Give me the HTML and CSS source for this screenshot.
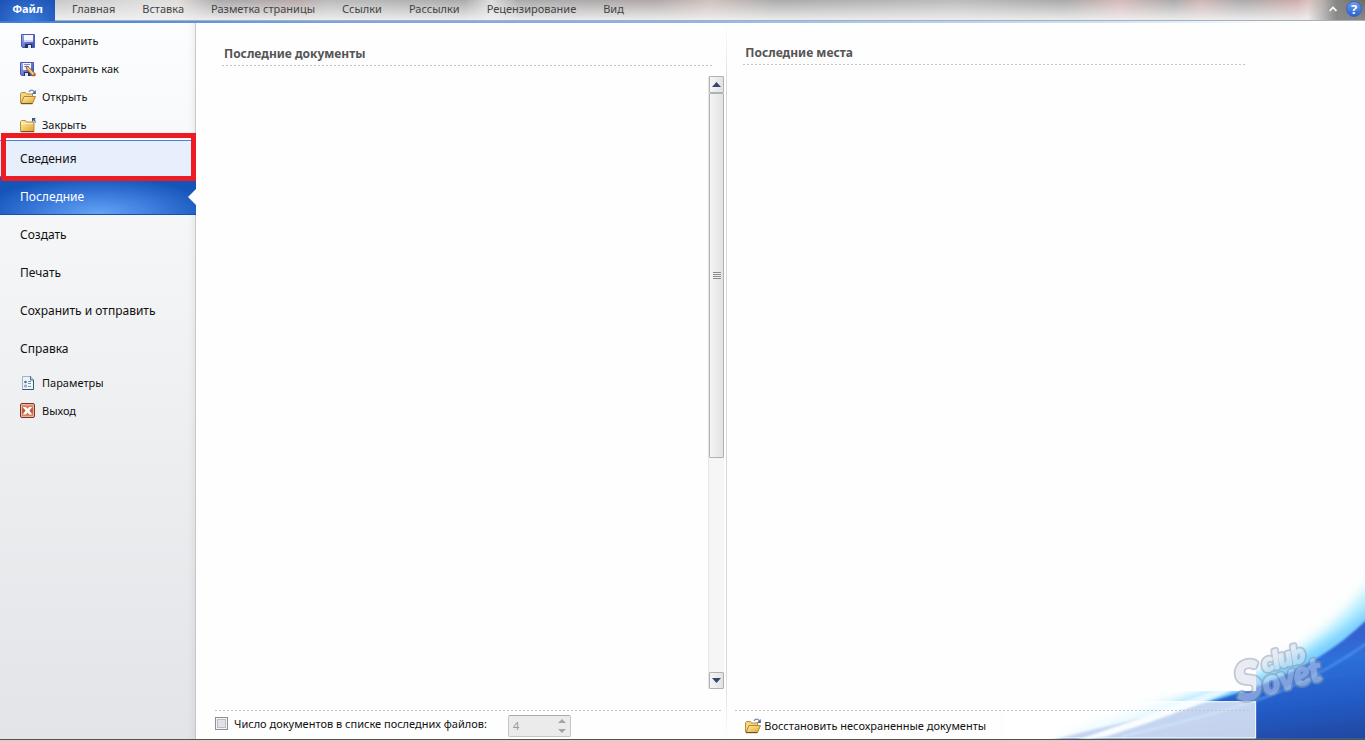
FILE: index.html
```html
<!DOCTYPE html>
<html lang="ru">
<head>
<meta charset="utf-8">
<title>Последние документы</title>
<link rel="stylesheet" href="styles.css">
</head>
<body>
<svg class="symbols" aria-hidden="true">
  <defs>
    <linearGradient id="gold" x1="0" y1="0" x2="1" y2="1"><stop offset="0" stop-color="#fff2ae"/><stop offset="1" stop-color="#e0a02e"/></linearGradient>
    <linearGradient id="disk" x1="0" y1="0" x2="1" y2="1"><stop offset="0" stop-color="#a3aff0"/><stop offset="1" stop-color="#3345ac"/></linearGradient>
    <linearGradient id="exit" x1="0" y1="0" x2="0" y2="1"><stop offset="0" stop-color="#eda58c"/><stop offset=".5" stop-color="#c4512f"/><stop offset="1" stop-color="#dd9878"/></linearGradient>
    <symbol id="i-save" viewBox="0 0 16 16">
      <path d="M1.500 1.500h13v13h-12l-1-1z" fill="url(#disk)" stroke="#4a5ab8"/>
      <path d="M4 2h9v7H4z" fill="#f5f9ff"/><path d="M4 7h9v2H4z" fill="#c9daf2"/>
      <path d="M5 11h7v4H5z" fill="#26305f"/><path d="M8 12h3v3H8z" fill="#dce4f5"/>
    </symbol>
    <symbol id="i-saveas" viewBox="0 0 16 16">
      <path d="M.5 1.500h13v13h-12l-1-1z" fill="url(#disk)" stroke="#4a5ab8"/>
      <path d="M3 2h8v7H3z" fill="#f5f9ff"/><path d="M4 3.500h6M4 5.500h5" stroke="#8298c8"/>
      <path d="M4 11h6v4H4z" fill="#26305f"/><path d="M5 12h3v3H5z" fill="#dce4f5"/>
      <path d="M6 5l2 .5 7 7-.5 2-2 .5-6-7z" fill="#e9ad58" stroke="#77502f" stroke-width=".8"/>
      <path d="M8 7l6 6.500" stroke="#ffe1a0"/><path d="M13 14l2-2 .7 2.500-1.200 1z" fill="#b34b45"/>
    </symbol>
    <symbol id="i-open" viewBox="0 0 16 16">
      <path d="M.5 14V4.500l1-1h4l1 1.500h6V8" fill="#f6d57c" stroke="#b98f45"/>
      <path d="M1 14.500L4 7.500h11.500l-3 7z" fill="url(#gold)" stroke="#b88532"/>
      <path d="M1 14.700h11.500" stroke="#694513"/>
      <path d="M9 3c1-2.500 4-2.500 5.500 0" fill="none" stroke="#7190ba" stroke-width="1.200"/><path d="M15.800 1v4h-4z" fill="#466895"/>
    </symbol>
    <symbol id="i-close" viewBox="0 0 16 16">
      <path d="M.5 14.500V4.500l1-1h4l1 1.500h7.500v9.500z" fill="url(#gold)" stroke="#b98f45"/>
      <path d="M1 6.500h12" stroke="#fff0b5"/><path d="M1 14.700h13" stroke="#694513"/>
      <path d="M12 1h4l-1.300 1.300C16 4 15.800 5 15 6.500c0-1.500-.3-2.300-1.300-3.200L12 5z" fill="#365680"/>
    </symbol>
    <symbol id="i-options" viewBox="0 0 16 16">
      <path d="M2.500 1.500h8l3 3v10h-11z" fill="#edf4fb" stroke="#9fb2c8"/>
      <path d="M13.500 5v9.500h-11" fill="none" stroke="#3c5675"/><path d="M10.500 1v4h3" fill="#b9cde1" stroke="#526d8e"/>
      <circle cx="5.500" cy="7" r="1.300" fill="#506d90"/><circle cx="5.500" cy="11" r="1" fill="#fff" stroke="#6b85a3"/>
      <path d="M8 6.500h3M8 8.500h3M8 11.500h3" stroke="#7690ae"/>
    </symbol>
    <symbol id="i-exit" viewBox="0 0 16 16">
      <rect x=".5" y=".5" width="14" height="14" rx="1.500" fill="url(#exit)" stroke="#79372b"/>
      <rect x="1.500" y="1.500" width="12" height="12" rx=".5" fill="none" stroke="#edb59f"/>
      <path d="M2.800 4h3l1.700 1.800L9.200 4h3L9.500 7.500l2.700 4h-3L7.500 9.600l-1.700 1.900h-3l2.700-4z" fill="#fff"/>
    </symbol>
  </defs>
</svg>

<header class="ribbon">
  <nav class="tabs">
    <button class="tab tab-file">Файл</button>
    <button class="tab">Главная</button>
    <button class="tab">Вставка</button>
    <button class="tab">Разметка страницы</button>
    <button class="tab">Ссылки</button>
    <button class="tab">Рассылки</button>
    <button class="tab">Рецензирование</button>
    <button class="tab">Вид</button>
  </nav>
  <div class="ribbon-tools">
    <button class="tool" aria-label="Свернуть ленту"><svg width="10" height="8" viewBox="0 0 10 8"><path d="M1.500 6L5 2.500 8.500 6" fill="none" stroke="#777" stroke-width="3"/><path d="M1.500 6L5 2.500 8.500 6" fill="none" stroke="#f4f4f4" stroke-width="2"/></svg></button>
    <button class="tool help" aria-label="Справка">?</button>
  </div>
</header>

<div class="backstage">
  <nav class="side">
    <button class="cmd"><svg class="icon"><use href="#i-save"/></svg>Сохранить</button>
    <button class="cmd"><svg class="icon"><use href="#i-saveas"/></svg>Сохранить как</button>
    <button class="cmd"><svg class="icon"><use href="#i-open"/></svg>Открыть</button>
    <button class="cmd"><svg class="icon"><use href="#i-close"/></svg>Закрыть</button>
    <div class="marked"><button class="page hover">Сведения</button></div>
    <button class="page current">Последние</button>
    <button class="page">Создать</button>
    <button class="page">Печать</button>
    <button class="page">Сохранить и отправить</button>
    <button class="page last">Справка</button>
    <button class="cmd"><svg class="icon"><use href="#i-options"/></svg>Параметры</button>
    <button class="cmd"><svg class="icon"><use href="#i-exit"/></svg>Выход</button>
  </nav>

  <main class="content">
    <svg class="swoosh" viewBox="0 0 1080 507" aria-hidden="true">
      <defs>
        <linearGradient id="sea" x1=".6" y1="0" x2=".9" y2="1"><stop offset="0" stop-color="#3d4fc4"/><stop offset=".4" stop-color="#2d70da"/><stop offset=".72" stop-color="#235bc6"/><stop offset="1" stop-color="#2348a0"/></linearGradient>
        <filter id="soft" x="-10%" y="-10%" width="120%" height="120%"><feGaussianBlur stdDeviation="18"/></filter>
        <filter id="fine"><feGaussianBlur stdDeviation="3"/></filter>
        <clipPath id="shown"><path d="M753 0H1080V507H0V362H753z"/></clipPath>
      </defs>
      <g clip-path="url(#shown)">
        <path d="M1120 10C1010 160 860 280 650 350S300 440 120 520L620 450 960 280 1120 150z" fill="#b5eeff" filter="url(#soft)"/>
        <path d="M1120 95C1000 200 860 290 700 350S420 440 260 500L700 410 960 275 1120 150z" fill="#6fcaff" filter="url(#soft)"/>
        <path d="M1100 135C980 255 860 315 700 368S370 450 140 510H1100z" fill="url(#sea)" filter="url(#fine)"/>
        <path d="M640 355C520 400 400 450 210 512L300 500C450 455 560 410 680 362z" fill="#e4f8ff" filter="url(#fine)"/>
        <path d="M1085 220C970 300 850 360 740 396S500 465 350 500" fill="none" stroke="#4a91ec" stroke-width="7" filter="url(#fine)"/>
      </g>
      <path d="M0 395H752V504H0z" fill="#fff" fill-opacity=".74"/>
      <path d="M300 362H752M420 395H752V504H0M752 335V362" fill="none" stroke="#fff" stroke-width="3"/>
      <g class="watermark">
        <g transform="translate(704 396) rotate(-15)">
          <text class="halo"><tspan class="initial">S</tspan><tspan class="rest">ovet</tspan></text>
          <text class="face"><tspan class="initial">S</tspan><tspan class="rest">ovet</tspan></text>
        </g>
        <g transform="translate(778 306) rotate(-15)">
          <text class="halo club">club</text>
          <text class="face club">club</text>
        </g>
      </g>
    </svg>

    <section class="pane docs">
      <div class="pane-main">
        <h2 class="title">Последние документы</h2>
        <div class="scrollbar">
          <button class="scroll-btn" aria-label="Вверх"><svg width="9" height="5" viewBox="0 0 9 5"><path d="M0 5L4.500 0 9 5z" fill="#33476e"/></svg></button>
          <div class="track"><div class="thumb"><span class="grip"></span></div></div>
          <button class="scroll-btn" aria-label="Вниз"><svg width="9" height="5" viewBox="0 0 9 5"><path d="M0 0L4.500 5 9 0z" fill="#33476e"/></svg></button>
        </div>
      </div>
      <footer class="foot">
        <input class="check" type="checkbox" id="quick">
        <label for="quick">Число документов в списке последних файлов:</label>
        <div class="spin">
          <input class="spin-value" type="text" value="4" aria-label="Число документов" disabled>
          <svg width="8" height="16" viewBox="0 0 8 16"><path d="M0 5L4 1 8 5zM0 11L4 15 8 11z" fill="#a5a5a5"/></svg>
        </div>
      </footer>
    </section>

    <section class="pane places">
      <div class="pane-main">
        <h2 class="title">Последние места</h2>
      </div>
      <footer class="foot">
        <button class="recover"><svg class="icon"><use href="#i-open"/></svg>Восстановить несохраненные документы</button>
      </footer>
    </section>
  </main>
</div>
<div class="edge"></div>
</body>
</html>
```
FILE: styles.css
```css
* { box-sizing: border-box; }
body {
  margin: 0;
  height: 100vh;
  display: flex;
  flex-direction: column;
  overflow: hidden;
  background: #fefefe;
  color: #111;
  font: 11px/16px "Noto Sans", "Open Sans", sans-serif;
}
button {
  margin: 0;
  padding: 0;
  border: 0;
  background: none;
  color: inherit;
  font: inherit;
}
.symbols { position: absolute; width: 0; height: 0; }
.icon { width: 16px; height: 16px; flex: none; }

/* Ribbon */
.ribbon {
  flex: none;
  display: flex;
  justify-content: space-between;
  height: 23px;
  border-bottom: 2px solid #76a5ed;
  border-image: linear-gradient(90deg, #3f7bdc, #76a5ed 25%, #8ab4f0 50%, #cbe2fa 80%, #fff 95%) 1;
  background:
    linear-gradient(#0000 20px, #aab0b8 20px),
    linear-gradient(#fff0, #f1f1f1e0 90%),
    linear-gradient(90deg, #bbb 0, #ddd 11%, #e2dcda 13%, #aaa 16%, #b7a9a9 22%, #bbb 24%, #aaa 34%, #ddd 36%, #aaa 38%, #b0a8a8 48%, #cfc0bd 52%, #aaa 57%, #bbb 70%, #a9a9a9 78%, #d6b9b9 82%, #aaa 86%, #d0b5b5 88%, #aaa 91%, #cfaaaa 95%, #e6e0d6 97%, #e0ddd6 98%, #777 100%);
}
.tabs { display: flex; height: 20px; }
.tab { padding: 0 14px 2px 13px; color: #444; }
.tab-file {
  width: 55px;
  height: 21px;
  margin-right: 4px;
  padding: 0 0 3px;
  background: radial-gradient(ellipse at 50% 100%, #3c7fdc, #1b50b4);
  color: #fff;
  font-weight: bold;
}
.ribbon-tools {
  display: flex;
  align-items: center;
  gap: 8px;
  height: 20px;
  padding: 0 3px 3px 20px;
  background: linear-gradient(90deg, #6660, #666b 50%, #666b);
}
.tool { display: flex; align-items: center; justify-content: center; }
.help {
  width: 16px;
  height: 16px;
  border: 1px solid #3568c4;
  border-radius: 8px;
  background: linear-gradient(#6c9df0, #2c62cd);
  color: #fff;
  font-size: 13px;
  font-weight: bold;
}

/* Side menu */
.backstage { flex: 1; display: flex; min-height: 0; }
.side {
  flex: none;
  display: flex;
  flex-direction: column;
  width: 196px;
  padding-top: 4px;
  border-right: 1px solid #c6c9cc;
  background: linear-gradient(90deg, #0000 188px, #0000000c), linear-gradient(#fcfdfe, #f1f3f5 40%, #e2e4e7);
}
.cmd {
  display: flex;
  align-items: center;
  gap: 6px;
  height: 28px;
  padding-left: 20px;
  text-align: left;
}
.page {
  width: 100%;
  height: 38px;
  padding: 2px 0 0 20px;
  font-size: 12px;
  text-align: left;
}
.marked {
  position: relative;
  height: 38px;
  padding-top: 1px;
  background: #fefefe;
}
.marked::after {
  content: "";
  position: absolute;
  inset: -6px -1px -4px 1px;
  border: 5px solid #ed1c24;
  z-index: 2;
}
.hover {
  display: block;
  height: 37px;
  padding-top: 1px;
  border: solid #4c7edb;
  border-width: 1px 0;
  background: #e7effc;
}
.current {
  position: relative;
  width: 196px;
  border-bottom: 1px solid #1b4fae;
  background: radial-gradient(ellipse 60% 100% at 50% 100%, #64a5f7, #3d7cdd 50%, #1555b9);
  color: #fff;
}
.current::after {
  content: "";
  position: absolute;
  right: 0;
  top: 12px;
  border: solid transparent;
  border-width: 8px 8px 8px 0;
  border-right-color: #fefefe;
}
.last { margin-bottom: 2px; }

/* Panes */
.content {
  position: relative;
  flex: 1;
  display: grid;
  grid-template-columns: 5fr 6fr;
}
.swoosh { position: absolute; right: 0; bottom: 0; width: 360px; height: 169px; }
.watermark {
  font-family: Lato, sans-serif;
  font-weight: bold;
  font-style: italic;
  stroke-linejoin: round;
  opacity: .5;
}
.halo { fill: #8895ad; stroke: #8895ad; stroke-width: 17px; }
.face { fill: #d5dcec; stroke: #d5dcec; stroke-width: 6px; }
.initial { font-size: 156px; }
.rest { font-size: 98px; }
.club { font-size: 74px; }
.pane { position: relative; display: flex; flex-direction: column; }
.docs {
  border-right: 1px solid;
  border-image: linear-gradient(#fefefe, #d4d7da 10%, #d4d7da 90%, #fefefe) 1;
}
.pane-main { flex: 1; display: flex; flex-direction: column; }
.docs .pane-main { padding: 22px 2px 21px 26px; }
.places .pane-main { padding: 21px 118px 0 16px; }
.title {
  margin: 0;
  padding: 0 0 3px 2px;
  color: #555;
  font-size: 12px;
  line-height: 18px;
}
.docs .title { margin-right: 11px; }
.title, .foot {
  background: repeating-linear-gradient(90deg, #c4c4c4 0 2px, #0000 2px 4px) 0 0 / 100% 1px no-repeat;
}
.title { background-position: 0 100%; }
.scrollbar {
  flex: 1;
  align-self: flex-end;
  display: flex;
  flex-direction: column;
  width: 16px;
  margin-top: 10px;
  border-left: 1px solid #e5e6e8;
  background: #f6f6f7;
}
.scroll-btn, .thumb {
  display: flex;
  align-items: center;
  justify-content: center;
  border: 1px solid #adb1b8;
  border-radius: 1px;
  background: linear-gradient(90deg, #f5f5f5, #e2e2e3);
}
.scroll-btn { height: 17px; }
.track { flex: 1; }
.thumb { height: 63%; }
.grip {
  width: 8px;
  height: 7px;
  background: repeating-linear-gradient(#888 0 1px, #f4f4f4 1px 2px);
}
.foot { display: flex; height: 29px; }
.docs .foot { margin: 0 5px 0 19px; }
.places .foot { margin: 0 114px 0 8px; padding: 2px 0 0 10px; }
.foot label { padding: 6px 21px 0 6px; }
.check {
  appearance: none;
  width: 13px;
  height: 13px;
  margin: 7px 0 0;
  border: 1px solid #8e8f8f;
  background: #dfe2e6;
  box-shadow: inset 0 0 0 1px #f4f4f4, inset 0 0 0 2px #b9bec5;
}
.spin {
  display: flex;
  align-items: center;
  width: 63px;
  height: 22px;
  margin-top: 5px;
  padding: 0 4px;
  border: 1px solid #c3c6ca;
  border-top-color: #a9abae;
  border-radius: 2px;
  background: #ebebeb;
}
.spin-value {
  flex: 1;
  min-width: 0;
  padding: 0;
  border: 0;
  background: none;
  color: #999;
  font: inherit;
}
.recover { display: flex; align-items: center; gap: 3px; }
.edge { flex: none; height: 2px; border-top: 1px solid #55524a; background: #d8d2c4; }
```
